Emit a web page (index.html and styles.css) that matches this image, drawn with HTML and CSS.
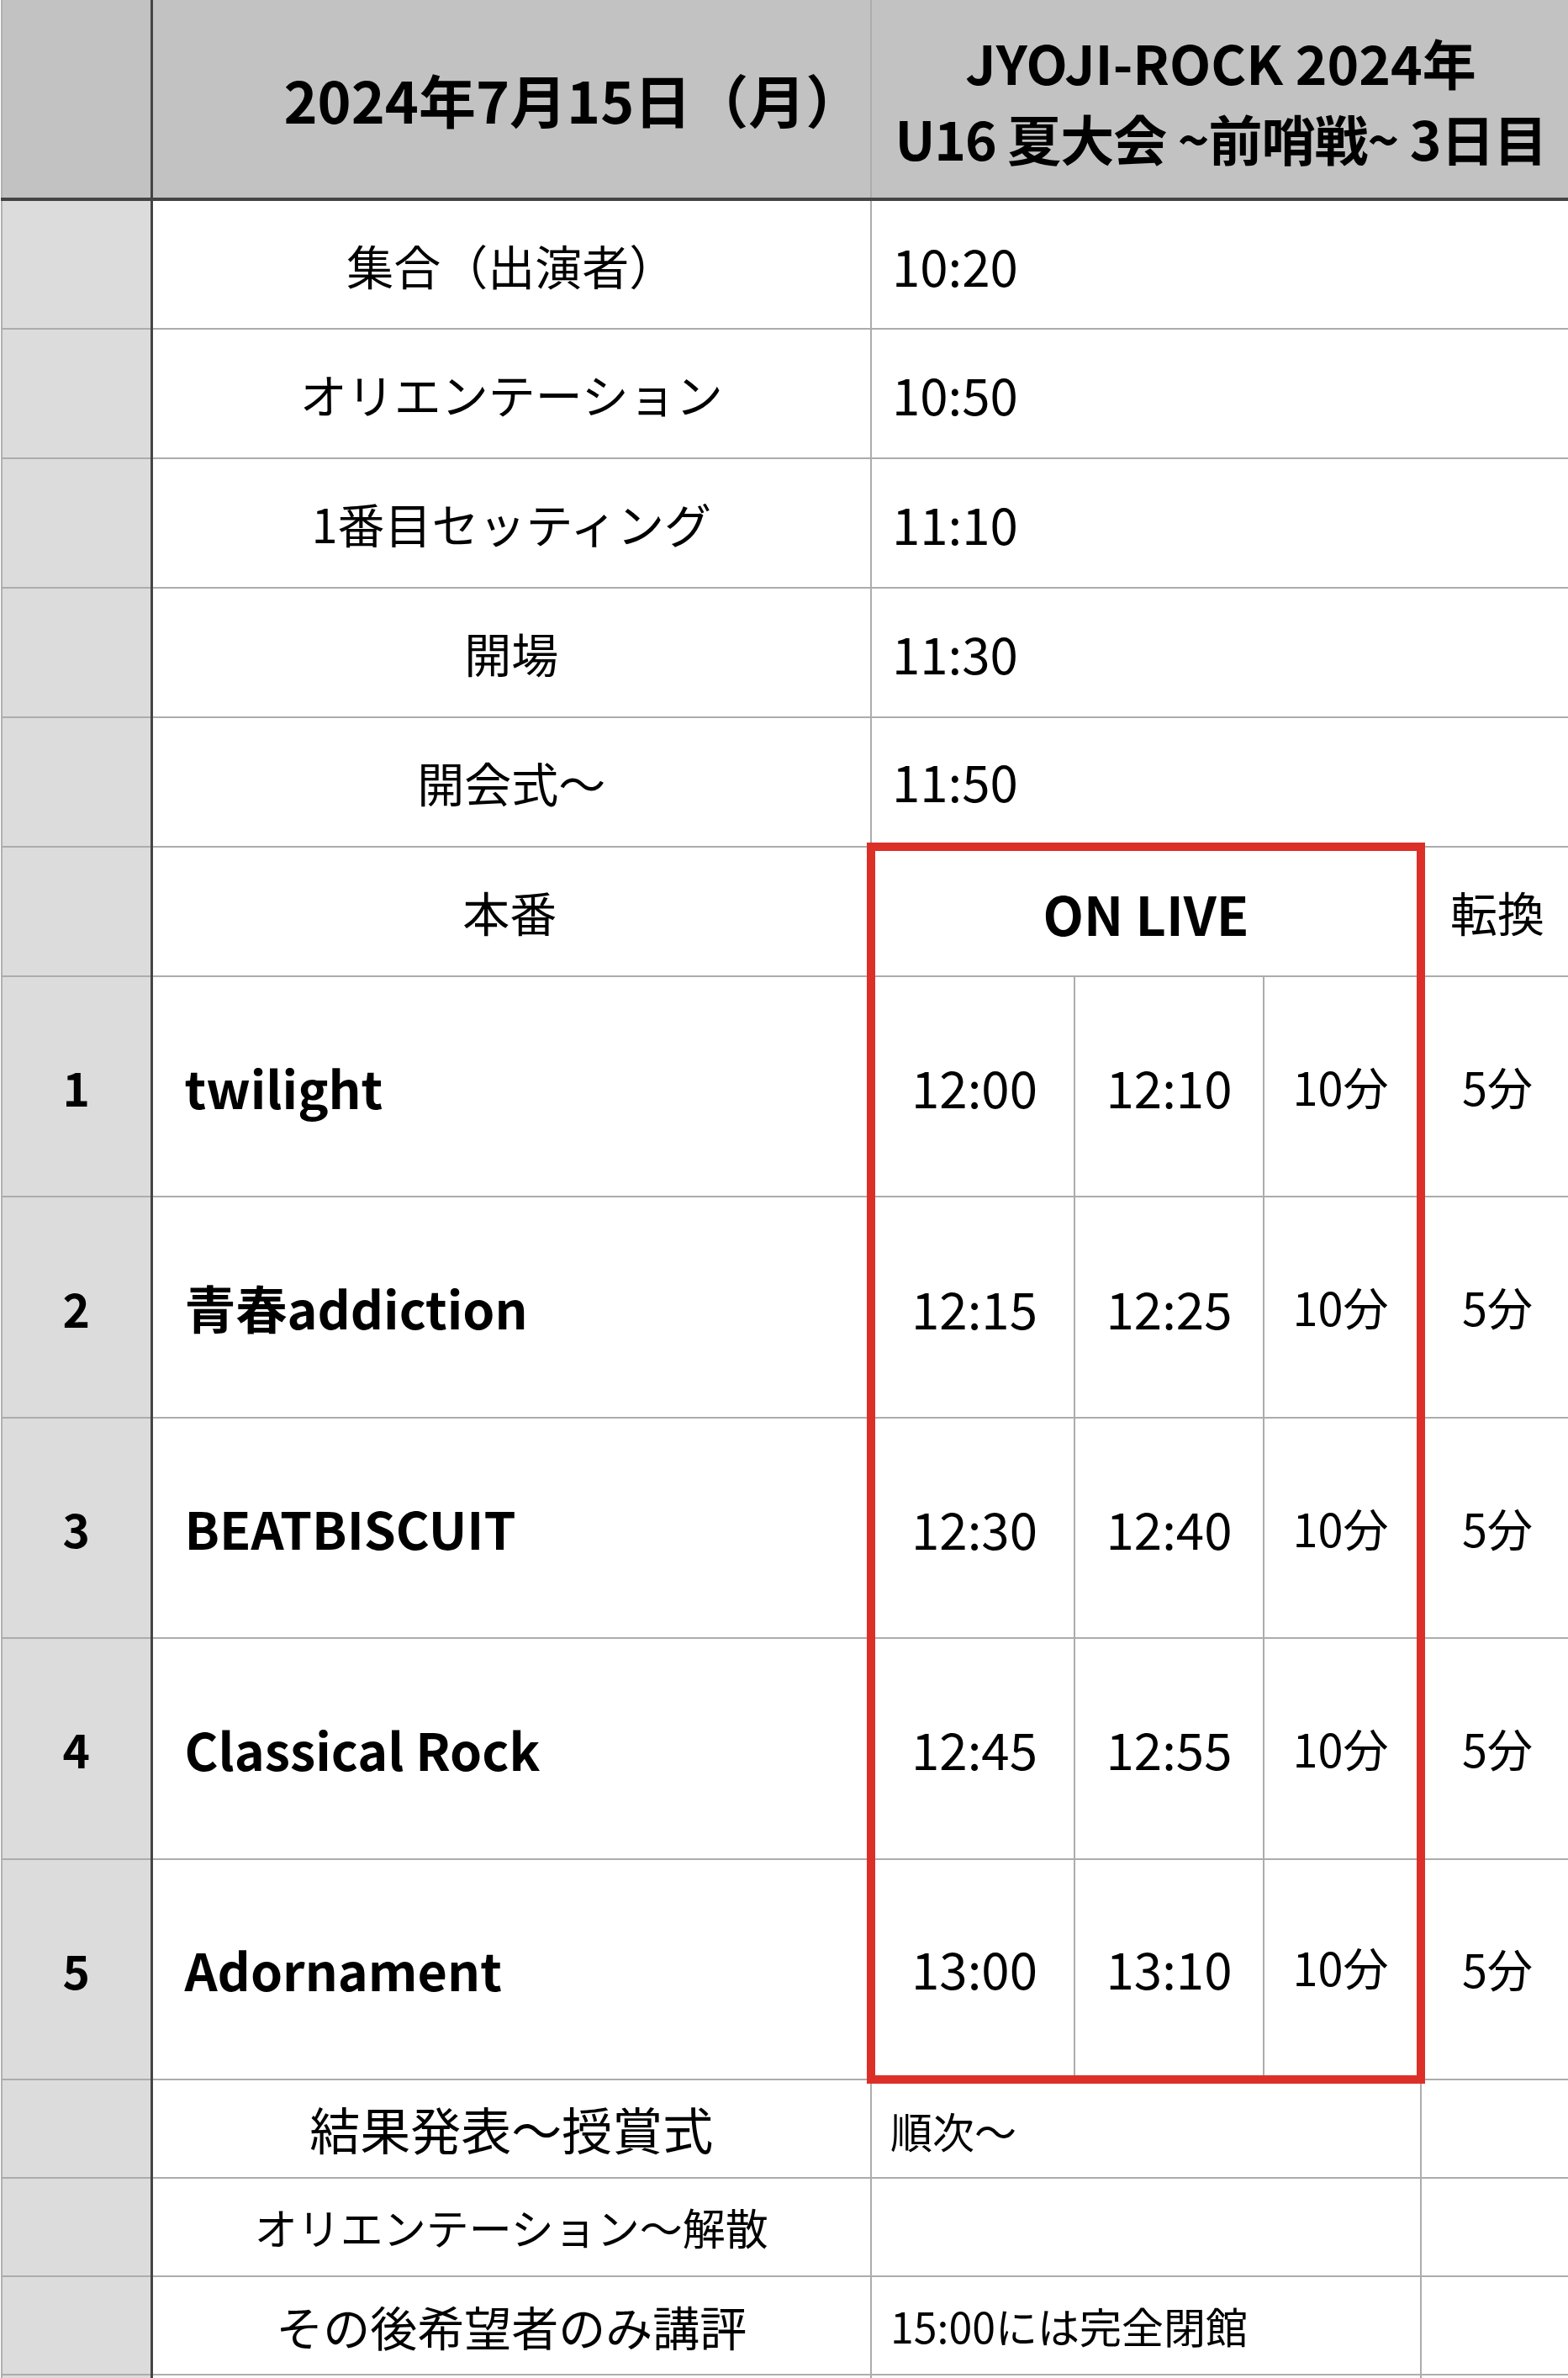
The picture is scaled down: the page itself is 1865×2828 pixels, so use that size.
FILE: index.html
```html
<!DOCTYPE html>
<html>
<head>
    <title>JYOJI-ROCK 2024 タイムテーブル</title>
    <link rel="stylesheet" href="styles.css">
</head>
<body>
    <table class="sheet">
        <colgroup>
            <col class="col-num">
            <col class="col-label">
            <col class="col-start">
            <col class="col-end">
            <col class="col-dur">
            <col class="col-change">
        </colgroup>
        <tr class="head">
            <td class="num"></td>
            <td class="date">2024年7月15日（月）</td>
            <td class="title" colspan="4">JYOJI-ROCK 2024年<br><span class="sub">U16 夏大会 ~前哨戦~ 3日目</span></td>
        </tr>
        <tr class="step">
            <td class="num"></td>
            <td class="label">集合（出演者）</td>
            <td class="time" colspan="4">10:20</td>
        </tr>
        <tr class="step">
            <td class="num"></td>
            <td class="label">オリエンテーション</td>
            <td class="time" colspan="4">10:50</td>
        </tr>
        <tr class="step">
            <td class="num"></td>
            <td class="label">1番目セッティング</td>
            <td class="time" colspan="4">11:10</td>
        </tr>
        <tr class="step">
            <td class="num"></td>
            <td class="label">開場</td>
            <td class="time" colspan="4">11:30</td>
        </tr>
        <tr class="step">
            <td class="num"></td>
            <td class="label">開会式〜</td>
            <td class="time" colspan="4">11:50</td>
        </tr>
        <tr class="step">
            <td class="num"></td>
            <td class="label">本番</td>
            <td class="live-head live-l live-r live-t" colspan="3">ON LIVE</td>
            <td class="change">転換</td>
        </tr>
        <tr class="band">
            <td class="num">1</td>
            <td class="name">twilight</td>
            <td class="clock live-l">12:00</td>
            <td class="clock">12:10</td>
            <td class="mins live-r">10分</td>
            <td class="mins">5分</td>
        </tr>
        <tr class="band">
            <td class="num">2</td>
            <td class="name">青春addiction</td>
            <td class="clock live-l">12:15</td>
            <td class="clock">12:25</td>
            <td class="mins live-r">10分</td>
            <td class="mins">5分</td>
        </tr>
        <tr class="band">
            <td class="num">3</td>
            <td class="name">BEATBISCUIT</td>
            <td class="clock live-l">12:30</td>
            <td class="clock">12:40</td>
            <td class="mins live-r">10分</td>
            <td class="mins">5分</td>
        </tr>
        <tr class="band">
            <td class="num">4</td>
            <td class="name">Classical Rock</td>
            <td class="clock live-l">12:45</td>
            <td class="clock">12:55</td>
            <td class="mins live-r">10分</td>
            <td class="mins">5分</td>
        </tr>
        <tr class="band">
            <td class="num">5</td>
            <td class="name">Adornament</td>
            <td class="clock live-l live-b">13:00</td>
            <td class="clock live-b">13:10</td>
            <td class="mins live-r live-b">10分</td>
            <td class="mins">5分</td>
        </tr>
        <tr class="after">
            <td class="num"></td>
            <td class="label big">結果発表〜授賞式</td>
            <td class="note" colspan="3">順次〜</td>
            <td></td>
        </tr>
        <tr class="after">
            <td class="num"></td>
            <td class="label small">オリエンテーション〜解散</td>
            <td class="note" colspan="3"></td>
            <td></td>
        </tr>
        <tr class="after">
            <td class="num"></td>
            <td class="label">その後希望者のみ講評</td>
            <td class="note" colspan="3">15:00には完全閉館</td>
            <td></td>
        </tr>
        <tr class="rest">
            <td class="num"></td>
            <td></td>
            <td colspan="3"></td>
            <td></td>
        </tr>
    </table>
</body>
</html>
```

FILE: styles.css
```css
body {
    margin: 0;
    background-color: #fff;
    font-family: "Noto Sans CJK JP", sans-serif;
    color: #000;
    overflow: hidden;
}

.sheet {
    border-collapse: collapse;
    table-layout: fixed;
    width: 1866px;
    margin-left: 1px;
}

.col-num { width: 178px; }
.col-label { width: 856px; }
.col-start { width: 242px; }
.col-end { width: 225px; }
.col-dur { width: 187px; }
.col-change { width: 178px; }

td {
    box-sizing: border-box;
    padding: 0;
    border-right: 2px solid #acacac;
    border-bottom: 2px solid #acacac;
    white-space: nowrap;
    overflow: hidden;
    line-height: 1.2;
    text-align: center;
}

/* row number column */
.num {
    background-color: #dcdcdc;
    border-left: 2px solid #b0b0b0;
    border-right: 3px solid #444;
    font-size: 55px;
    font-weight: bold;
}

/* header */
.head td {
    height: 237px;
    background-color: #c1c2c1;
    border-bottom: 4px solid #444;
    font-weight: bold;
}

.date {
    font-size: 68px;
    text-align: left;
    padding-left: 156px;
}

.title {
    font-size: 64px;
    line-height: 90px;
}

.title .sub {
    letter-spacing: -1px;
}

/* schedule rows */
.step td {
    height: 154px;
}

.label {
    font-size: 56px;
}

.label.big {
    font-size: 60px;
}

.label.small {
    font-size: 51px;
}

.time {
    font-size: 60px;
    text-align: left;
    padding-left: 24px;
}

.live-head {
    font-size: 63px;
    font-weight: bold;
}

.change {
    font-size: 56px;
}

/* band rows */
.band td {
    height: 262.4px;
}

.name {
    font-size: 61px;
    font-weight: bold;
    text-align: left;
    padding-left: 38px;
}

.clock {
    font-size: 60px;
}

.mins {
    font-size: 54px;
}

/* red frame around the performance slots */
.live-l { border-left: 10px solid #dc2f28; }
.live-r { border-right: 10px solid #dc2f28; }
.live-t { border-top: 10px solid #dc2f28; }
.live-b { border-bottom: 10px solid #dc2f28; }

/* closing rows */
.after td {
    height: 117px;
}

.note {
    font-size: 50px;
    text-align: left;
    padding-left: 22px;
}

.rest td {
    height: 6px;
}
```
